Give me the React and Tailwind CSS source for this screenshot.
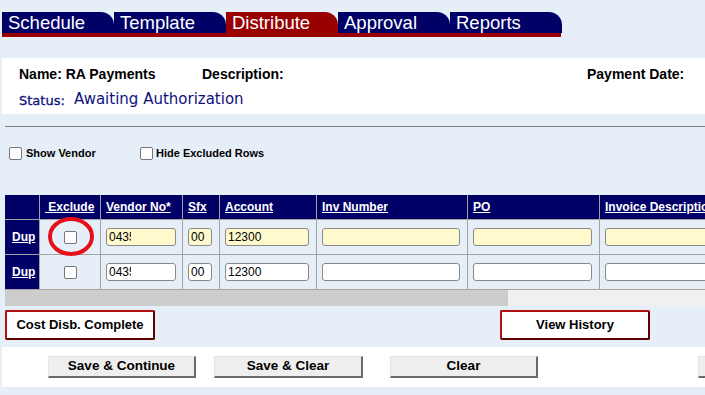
import React from "react";

const tabs = [
  { label: "Schedule", active: false },
  { label: "Template", active: false },
  { label: "Distribute", active: true },
  { label: "Approval", active: false },
  { label: "Reports", active: false },
];

const headers = [
  "",
  "\u00a0Exclude",
  "Vendor No*",
  "Sfx",
  "Account",
  "Inv Number",
  "PO",
  "Invoice Description",
];

function Field({ width, yellow, children, clip }) {
  return (
    <div
      className={`h-[18px] border border-[#8a8a8a] rounded-[3px] flex items-center pl-[2px] text-[12px] text-black overflow-hidden ${
        yellow ? "bg-[#fffacd]" : "bg-white"
      }`}
      style={{ width }}
    >
      {clip ? (
        <span className="block overflow-hidden whitespace-nowrap" style={{ width: clip }}>
          {children}
        </span>
      ) : (
        children
      )}
    </div>
  );
}

function Checkbox() {
  return <div className="w-[13px] h-[13px] bg-white border border-[#767676] rounded-[2px]" />;
}

function DataRow({ yellow, circled }) {
  return (
    <>
      <div className="bg-[#000066] flex items-center pl-[7px]">
        <span className="text-white font-bold text-[12px] underline">Dup</span>
      </div>
      <div className="bg-[#e6eef8] flex items-center justify-center relative">
        <Checkbox />
        {circled && (
          <svg
            className="absolute left-[8px] top-[-3px] z-10"
            width="46"
            height="39"
            viewBox="0 0 46 39"
          >
            <ellipse cx="23" cy="19.5" rx="21" ry="17.5" fill="none" stroke="#e5101a" strokeWidth="4" />
          </svg>
        )}
      </div>
      <div className="bg-[#e6eef8] flex items-center pl-[5px]">
        <Field width={70} yellow={yellow} clip={22}>
          04359
        </Field>
      </div>
      <div className="bg-[#e6eef8] flex items-center pl-[5px]">
        <Field width={24} yellow={yellow}>
          00
        </Field>
      </div>
      <div className="bg-[#e6eef8] flex items-center pl-[5px]">
        <Field width={84} yellow={yellow}>
          12300
        </Field>
      </div>
      <div className="bg-[#e6eef8] flex items-center pl-[5px]">
        <Field width={138} yellow={yellow} />
      </div>
      <div className="bg-[#e6eef8] flex items-center pl-[5px]">
        <Field width={119} yellow={yellow} />
      </div>
      <div className="bg-[#e6eef8] flex items-center pl-[5px]">
        <Field width={140} yellow={yellow} />
      </div>
    </>
  );
}

function RedButton({ children, className }) {
  return (
    <div
      className={`h-[30px] w-[150px] bg-white rounded-[2px] border-2 border-t-[#b01212] border-l-[#b01212] border-r-[#5e0000] border-b-[#5e0000] flex items-center justify-center text-[13px] font-bold text-black ${className}`}
    >
      {children}
    </div>
  );
}

function GrayButton({ children, className }) {
  return (
    <div
      className={`h-[22px] bg-[#efefef] border-t border-l border-t-[#e4e4e4] border-l-[#e4e4e4] border-r-2 border-b-2 border-r-[#6b6b6b] border-b-[#6b6b6b] flex items-center justify-center text-[13.5px] font-bold text-black ${className}`}
    >
      {children}
    </div>
  );
}

export default function App() {
  return (
    <div className="w-[705px] h-[395px] overflow-hidden bg-[#e6eef8] font-['Liberation_Sans',Arial,sans-serif]">
      {/* Tabs */}
      <div className="pt-[12px] pl-[2px]">
        <div className="flex">
          {tabs.map((t) => (
            <div
              key={t.label}
              className={`w-[112px] h-[21px] rounded-tr-[13px] pl-[6px] text-white text-[18.5px] leading-[21px] ${
                t.active ? "bg-[#990000]" : "bg-[#000066]"
              }`}
            >
              {t.label}
            </div>
          ))}
        </div>
        <div className="w-[559px] h-[4px] bg-[#990000]" />
      </div>

      {/* Header panel */}
      <div className="mt-[21px] ml-[2px] h-[56px] bg-white pl-[17px] pt-[8px]">
        <div className="flex h-[16px] items-center text-[14px] font-bold text-black">
          <span className="w-[183px]">Name: RA Payments</span>
          <span className="w-[385px]">Description:</span>
          <span>Payment Date:</span>
        </div>
        <div className="flex items-center h-[18px] mt-[8px] text-[#10107e] font-['DejaVu_Sans',Verdana,sans-serif]">
          <span className="text-[13px] w-[55px] pt-[3px] [-webkit-text-stroke:0.3px_#10107e]">Status:</span>
          <span className="text-[15px]">Awaiting Authorization</span>
        </div>
      </div>

      <div className="mt-[12px] ml-[5px] h-px bg-[#808080]" />

      {/* Options */}
      <div className="mt-[18px] h-[16px] flex items-center pl-[9px] text-[11px] font-bold text-black">
        <Checkbox />
        <span className="ml-[4px] w-[114px]">Show Vendor</span>
        <Checkbox />
        <span className="ml-[3px]">Hide Excluded Rows</span>
      </div>

      {/* Grid */}
      <div className="mt-[34px] ml-[5px]">
        <div className="grid grid-cols-[34px_60px_81px_36px_96px_150px_131px_160px] grid-rows-[24px_34px_34px] gap-px bg-[#a3a3a3] border-b border-[#a3a3a3] w-max">
          {headers.map((h, i) => (
            <div key={i} className="bg-[#000066] flex items-center pl-[5px]">
              {h && (
                <span className="text-white font-bold text-[12px] underline whitespace-nowrap">{h}</span>
              )}
            </div>
          ))}
          <DataRow yellow circled />
          <DataRow />
        </div>
        <div className="flex h-[16px]">
          <div className="w-[503px] bg-[#cdcdcd]" />
          <div className="flex-1 bg-[#f0f0f0]" />
        </div>
      </div>

      {/* Action buttons */}
      <div className="mt-[4px] flex pl-[5px]">
        <RedButton>Cost Disb. Complete</RedButton>
        <RedButton className="ml-[345px]">View History</RedButton>
      </div>

      {/* Footer */}
      <div className="mt-[7px] ml-[2px] h-[40px] bg-white pt-[9px] flex">
        <GrayButton className="ml-[46px] w-[148px] shrink-0">Save &amp; Continue</GrayButton>
        <GrayButton className="ml-[18px] w-[149px] shrink-0">Save &amp; Clear</GrayButton>
        <GrayButton className="ml-[27px] w-[148px] shrink-0">Clear</GrayButton>
        <GrayButton className="ml-[160px] w-[148px] shrink-0" />
      </div>
    </div>
  );
}
